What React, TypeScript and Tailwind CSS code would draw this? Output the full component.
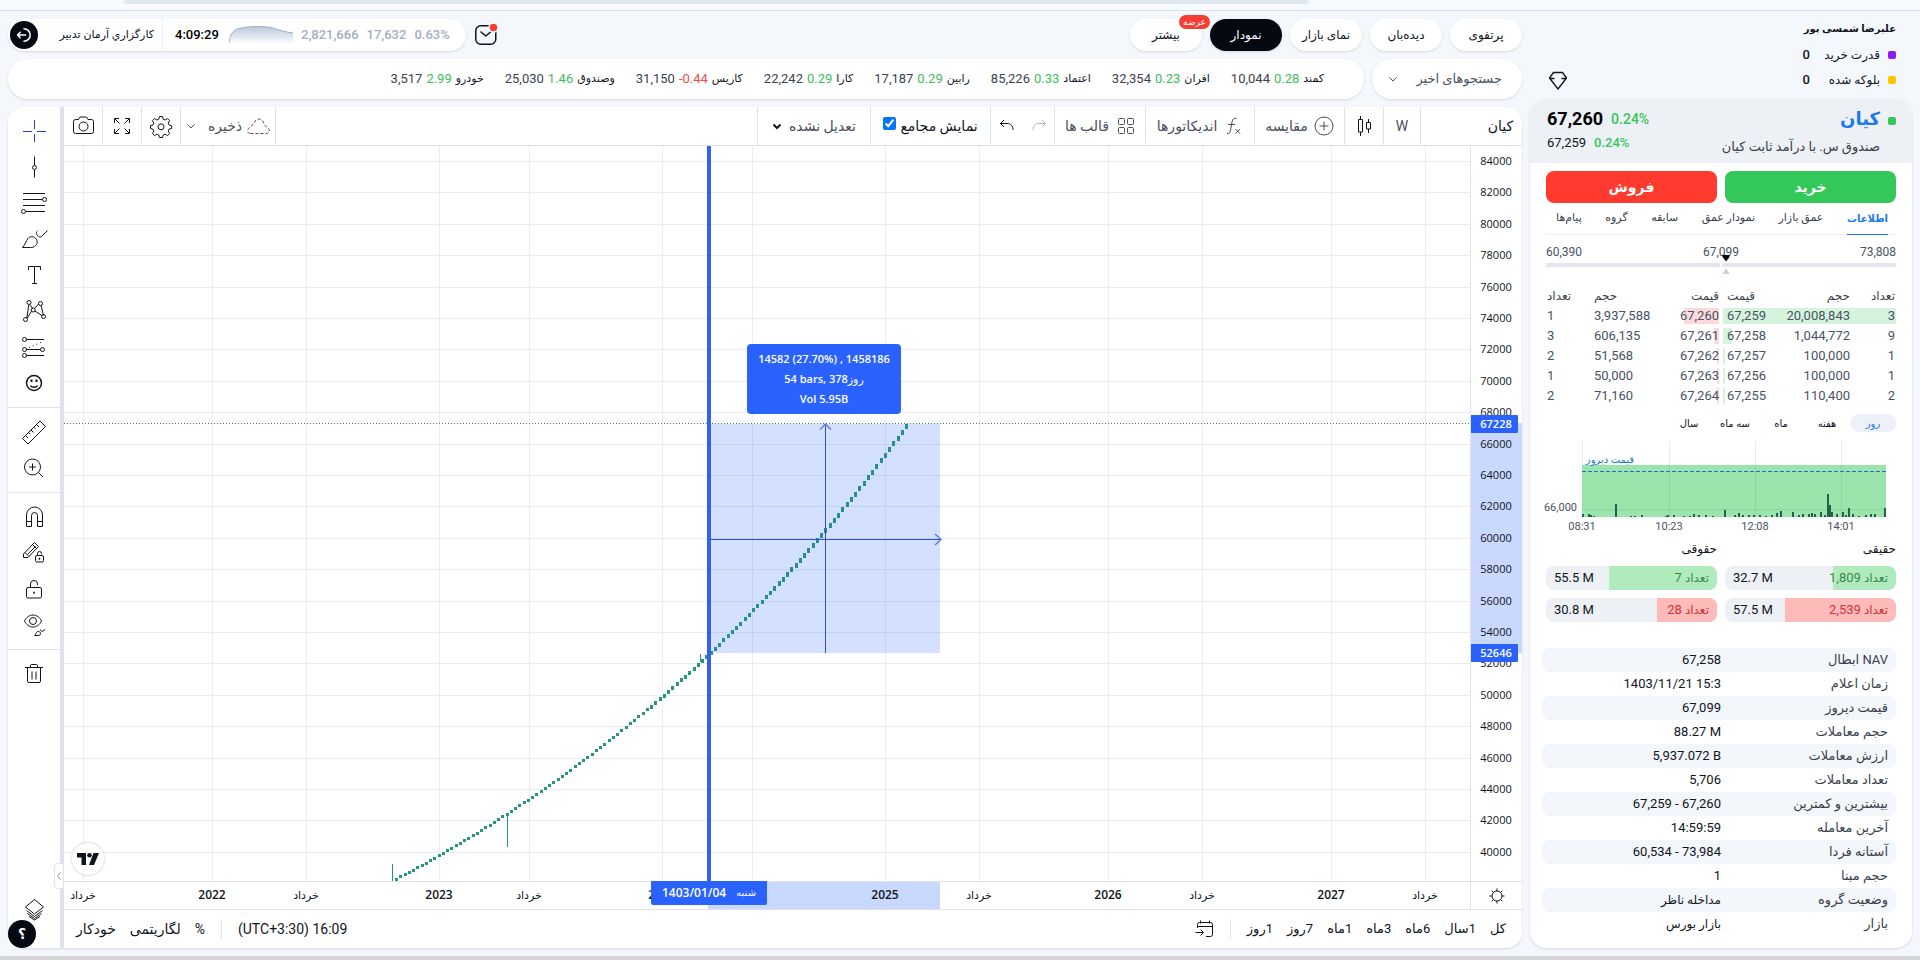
import type { ReactNode } from 'react'
import clsx from 'clsx'

const tickers = [
  { name: 'کمند', change: '0.28', price: '10,044' },
  { name: 'افران', change: '0.23', price: '32,354' },
  { name: 'اعتماد', change: '0.33', price: '85,226' },
  { name: 'رابین', change: '0.29', price: '17,187' },
  { name: 'کارا', change: '0.29', price: '22,242' },
  { name: 'کاریس', change: '-0.44', price: '31,150' },
  { name: 'وصندوق', change: '1.46', price: '25,030' },
  { name: 'خودرو', change: '2.99', price: '3,517' },
]

const bids = [
  { count: '3', volume: '20,008,843', price: '67,259', depth: 100 },
  { count: '9', volume: '1,044,772', price: '67,258', depth: 5 },
  { count: '1', volume: '100,000', price: '67,257', depth: 1 },
  { count: '1', volume: '100,000', price: '67,256', depth: 1 },
  { count: '2', volume: '110,400', price: '67,255', depth: 1 },
]

const asks = [
  { count: '1', volume: '3,937,588', price: '67,260', depth: 20 },
  { count: '3', volume: '606,135', price: '67,261', depth: 3 },
  { count: '2', volume: '51,568', price: '67,262', depth: 1 },
  { count: '1', volume: '50,000', price: '67,263', depth: 1 },
  { count: '2', volume: '71,160', price: '67,264', depth: 1 },
]

const details = [
  ['NAV ابطال', '67,258'],
  ['زمان اعلام', '1403/11/21 15:3'],
  ['قیمت دیروز', '67,099'],
  ['حجم معاملات', '88.27 M'],
  ['ارزش معاملات', '5,937.072 B'],
  ['تعداد معاملات', '5,706'],
  ['بیشترین و کمترین', '67,259 - 67,260'],
  ['آخرین معامله', '14:59:59'],
  ['آستانه فردا', '60,534 - 73,984'],
  ['حجم مبنا', '1'],
  ['وضعیت گروه', 'مداخله ناظر'],
  ['بازار', 'بازار بورس'],
]

/* ---------- icons ---------- */

function Icon({ children, size = 28 }: { children: ReactNode; size?: number }) {
  return (
    <svg
      width={size}
      height={size}
      viewBox={`0 0 ${size} ${size}`}
      fill="none"
      stroke="currentColor"
      strokeWidth="1"
      className="shrink-0"
      aria-hidden="true"
    >
      {children}
    </svg>
  )
}

const CrossIcon = () => (
  <Icon>
    <path d="M14.5 3v9M14.5 17v8M3 14.5h9M17 14.5h9" stroke="#2a3fd0" />
  </Icon>
)

const LineIcon = () => (
  <Icon>
    <path d="M14.5 3.5v8.500M14.5 17v7.500" />
    <circle cx="14.500" cy="14.500" r="2" />
  </Icon>
)

const FibIcon = () => (
  <Icon>
    <path d="M3 4.500h22M3 10.500h19.500M3 16.500h22M6 22.500h19" />
    <circle cx="24.500" cy="10.500" r="2" />
    <circle cx="3.500" cy="22.500" r="2" />
  </Icon>
)

const BrushIcon = () => (
  <Icon>
    <path d="M2.500 22.500C5 20 6 16 8 13.500c2-2.500 5.500-2.300 7.500-.3s2.300 5.300.3 7.300c-1.600 1.600-3.300 2-5.300 2z" />
    <path d="M17.500 6l-.8.800c-1.200 1.800 1.300 5.200 3.300 5.200 1.500 0 2-1 3-2l4.500-4.500" />
  </Icon>
)

const TextIcon = () => (
  <Icon>
    <path d="M8.500 9V5.500h12V9M14.500 5.500v17M12 22.500h5" />
  </Icon>
)

const PatternIcon = () => (
  <Icon>
    <path d="M8.800 8l-2 13M10 7.500l2.500 4M14.500 11.500l4-4.500M21 8l2.500 10.500M14.800 14l7.500 4.800M11.500 14.200L7 21.300" />
    <circle cx="9" cy="5.500" r="2" />
    <circle cx="20.500" cy="6.500" r="2" />
    <circle cx="13.200" cy="13" r="2" />
    <circle cx="23.500" cy="19.500" r="2" />
    <circle cx="5.500" cy="22.500" r="2" />
  </Icon>
)

const ForecastIcon = () => (
  <Icon>
    <path d="M6 6.500h18M6 16.500h14.500M6 22.500h18" />
    <path d="M9 14.500L23 8.500" strokeDasharray="1 3" />
    <circle cx="4.500" cy="6.500" r="2" />
    <circle cx="4.500" cy="16.500" r="2" />
    <circle cx="22.500" cy="16.500" r="2" />
    <circle cx="4.500" cy="22.500" r="2" />
  </Icon>
)

const SmileIcon = () => (
  <Icon>
    <circle cx="14" cy="14" r="7.500" strokeWidth="1.500" />
    <path d="M10.500 16.500c1 2.300 6 2.300 7 0" strokeWidth="1.500" />
    <path d="M11.500 10.500v2.500M16.500 10.500v2.500" strokeWidth="2" />
  </Icon>
)

const RulerIcon = () => (
  <Icon>
    <path d="M2.500 20.500L20 3l5.500 5.500L8 26z" strokeLinejoin="round" />
    <path d="M5.500 17.500l2.500 2.500M8.500 14.500l1.700 1.700M11 12l2.500 2.500M13.800 9.200l1.700 1.700M16.500 6.500L19 9" />
  </Icon>
)

const ZoomIcon = () => (
  <Icon>
    <circle cx="12.500" cy="13" r="8" />
    <path d="M18.500 18.500L23 23M9 13h7M12.500 9.500v7" />
  </Icon>
)

const MagnetIcon = () => (
  <Icon>
    <path d="M6.500 23.500V12a8 8 0 0 1 16 0v11.500h-5V12.500a3 3 0 0 0-6 0v11zM6.500 18.500h5M17.500 18.500h5" />
  </Icon>
)

const Padlock = ({ x, y, w, h, r }: { x: number; y: number; w: number; h: number; r: number }) => (
  <>
    <rect x={x} y={y} width={w} height={h} rx="1.500" />
    <path d={`M${x + w / 2 - r} ${y}v-${r}a${r} ${r} 0 0 1 ${r * 2} 0v1`} />
    <path d={`M${x + w / 2} ${y + h / 2 - 1}v2`} strokeWidth="1.500" />
  </>
)

const PencilLockIcon = () => (
  <Icon>
    <path d="M3.500 18.500v-3.500L14.500 3.500l4 4L8 18.500zM5 13.500l4 4M12.500 5.500l4 4M7.500 15.500l8-8" strokeLinejoin="round" />
    <Padlock x={15.5} y={16.5} w={8} h={6.5} r={2} />
  </Icon>
)

const LockIcon = () => (
  <Icon>
    <Padlock x={6.5} y={12.5} w={15} h={10.5} r={3.5} />
  </Icon>
)

const EyeIcon = () => (
  <Icon>
    <path d="M4.500 10c2-4 5-6 8.500-6s6.500 2 8.500 6c-2 4-5 6-8.500 6s-6.500-2-8.500-6z" />
    <circle cx="13" cy="10" r="3.500" />
    <path d="M14.500 24.500c2-1 1-3 3-4 1.500-.5 3 .5 3 2s-1 2-2.500 2zM20.500 18.500c0 2 1.500 2 2.500 1.500l2-1.500" />
  </Icon>
)

const TrashIcon = () => (
  <Icon>
    <path d="M5 7.500h18M10.500 7V5.500a1 1 0 0 1 1-1h5a1 1 0 0 1 1 1V7M7.500 7.500v13.500a1.500 1.500 0 0 0 1.500 1.500h10a1.500 1.500 0 0 0 1.500-1.500V7.500M12 11.500v8M16 11.500v8" />
  </Icon>
)

const LayersIcon = () => (
  <Icon>
    <path d="M14.500 3.500l9 7.500-9 7-9-7zM6.500 14.500l8 6 8-6M7.500 17.500l7 5 7-5M9 20.500l5.500 3.500 5.500-3.500" strokeLinejoin="round" />
  </Icon>
)

const GearIcon = () => (
  <Icon>
    <path d="M12.500 4.500h3l.7 2.700 1.900.8 2.400-1.400 2.100 2.100-1.400 2.400.8 1.900 2.700.7v2.800l-2.700.7-.8 1.900 1.400 2.400-2.100 2.100-2.400-1.400-1.900.8-.7 2.500h-3l-.7-2.500-1.900-.8-2.400 1.400-2.100-2.100 1.400-2.400-.8-1.900-2.500-.7v-2.800l2.500-.7.8-1.900-1.400-2.400 2.100-2.100L9.900 8l1.900-.8z" strokeLinejoin="round" />
    <circle cx="14" cy="14.800" r="3" />
  </Icon>
)

const ExpandIcon = () => (
  <Icon>
    <path d="M6.500 11V6.500H11M7 7l4.500 4.500M17 6.500h4.500V11M21 7l-4.500 4.500M6.500 17v4.500H11M7 21l4.500-4.500M21.500 17v4.500H17M21 21l-4.500-4.500" />
  </Icon>
)

const CameraIcon = () => (
  <Icon>
    <path d="M9.500 7.500l1.500-2.500h6.500L19 7.500h3.500a2 2 0 0 1 2 2v10a2 2 0 0 1-2 2h-16a2 2 0 0 1-2-2v-10a2 2 0 0 1 2-2z" />
    <circle cx="14.500" cy="14.500" r="4.500" />
  </Icon>
)

const CloudIcon = () => (
  <Icon size={24}>
    <path d="M4.500 19.500h15.500a3 3 0 0 0 2-5.500l-3.500-3-1.500-3.500c-2-3.500-7-3.500-8.500 1l-.5 1.500-4 3C1 15 .500 19.500 4.500 19.500z" strokeDasharray="3 2" />
  </Icon>
)

const CompareIcon = () => (
  <Icon size={20}>
    <circle cx="10" cy="10" r="9" />
    <path d="M10 5.500v9M5.500 10h9" />
  </Icon>
)

const FxIcon = () => (
  <Icon size={18}>
    <path d="M2 16.500c2 .5 3-.5 3.500-3.500L7 5c.500-3 2-4 4.500-3.500M3 7.500h7M10.500 12l4.500 4.500M15 12l-4.500 4.500" />
  </Icon>
)

const GridIcon = () => (
  <Icon size={18}>
    <rect x="1.500" y="1.500" width="6" height="6" rx="1" />
    <rect x="10.500" y="1.500" width="6" height="6" rx="1" />
    <rect x="1.500" y="10.500" width="6" height="6" rx="1" />
    <rect x="10.500" y="10.500" width="6" height="6" rx="1" />
  </Icon>
)

const CandlesIcon = () => (
  <Icon size={20}>
    <path d="M6.500 0v3M6.500 16v4M14.500 3v3M14.500 13v4" />
    <path d="M4.500 3.500h4v12.500h-4zM12.500 6.500h4v6.500h-4z" />
  </Icon>
)

const UndoIcon = () => (
  <Icon size={16}>
    <path d="M5 2L1.500 5.500 5 9M1.500 5.500H8c4 0 6 2.500 6 6.500" />
  </Icon>
)

const RedoIcon = () => (
  <Icon size={16}>
    <path d="M11 2l3.500 3.500L11 9M14.500 5.500H8c-4 0-6 2.500-6 6.500" />
  </Icon>
)

const Chevron = ({ strong }: { strong?: boolean }) => (
  <svg width="10" height="10" viewBox="0 0 10 10" fill="none" stroke="currentColor" strokeWidth={strong ? 2 : 1} className="shrink-0">
    <path d="M1.500 3.500L5 7l3.500-3.500" />
  </svg>
)

const MailIcon = () => (
  <svg width="24" height="24" viewBox="0 0 24 24" fill="none" stroke="#10151c" strokeWidth="1.500">
    <rect x="1.750" y="2.750" width="20" height="18.500" rx="5" />
    <path d="M7 9l4.800 4L16.500 9" strokeLinecap="round" strokeLinejoin="round" />
    <circle cx="19.500" cy="4.500" r="4.500" fill="#ff3b30" stroke="#f4f8fc" />
  </svg>
)

const ExitIcon = () => (
  <svg width="16" height="16" viewBox="0 0 16 16" fill="none" stroke="white" strokeWidth="1.500" strokeLinecap="round" strokeLinejoin="round">
    <path d="M8 1.800a6 6 0 1 1 0 12.400M9.500 8H1.500M4.200 5.300L1.500 8l2.700 2.700" />
  </svg>
)

const DiamondIcon = () => (
  <svg width="20" height="20" viewBox="0 0 20 20" fill="none" stroke="#10151c" strokeWidth="1.300" strokeLinejoin="round">
    <path d="M5.500 1.500h9l4 5.500-8.500 11L1.500 7zM2 7.500h4.500M13.500 7.500H18" />
  </svg>
)

const GoToIcon = () => (
  <Icon size={20}>
    <path d="M3.500 9V5.500a2 2 0 0 1 2-2h11a2 2 0 0 1 2 2v10a2 2 0 0 1-2 2H12M3.500 7.500h15M6.500 1.500v3M15.500 1.500v3M1.500 13.500H9M6.500 10.500l3 3-3 3" />
  </Icon>
)

const AxisSettingsIcon = () => (
  <Icon size={18}>
    <circle cx="9" cy="9" r="5" />
    <path d="M9 1.500V4M9 14v2.500M1.500 9H4M14 9h2.500M3.700 3.700l1.800 1.800M12.500 12.500l1.800 1.800M14.300 3.700l-1.800 1.800M5.500 12.500l-1.800 1.800" />
  </Icon>
)

/* ---------- top rows ---------- */

function StatusPill() {
  return (
    <div dir="ltr" className="flex h-8 w-[458px] items-center rounded-full bg-white pr-4 pl-0.5 shadow-sm">
      <button aria-label="خروج" className="flex size-7 items-center justify-center rounded-full bg-[#050a12]">
        <ExitIcon />
      </button>
      <span dir="rtl" className="w-[124px] pr-2 text-[11px] whitespace-nowrap text-[#10151c]">
        کارگزاري آرمان تدبير
      </span>
      <span className="h-8 w-px bg-[#eceff3]" />
      <span className="w-[66px] pl-3 text-[13px] font-medium text-black">4:09:29</span>
      <svg width="64" height="18" viewBox="0 0 64 18">
        <defs>
          <linearGradient id="spark" x1="0" x2="0" y1="0" y2="1">
            <stop offset="0" stopColor="#b9c7da" />
            <stop offset="1" stopColor="#ffffff" />
          </linearGradient>
        </defs>
        <path d="M0 17C1 7 5 3 12 2 22 0 36 0 44 2c6 2 12 4 20 5v11H0z" fill="url(#spark)" />
        <path d="M0 17C1 7 5 3 12 2 22 0 36 0 44 2c6 2 12 4 20 5" fill="none" stroke="#9fb0c8" />
      </svg>
      <span className="ml-2 flex gap-2 text-[13px] font-medium text-[#a3aec2]">
        <span>2,821,666</span>
        <span>17,632</span>
        <span>0.63%</span>
      </span>
    </div>
  )
}

function TopNav() {
  const items = ['پرتفوی', 'دیده‌بان', 'نمای بازار', 'نمودار', 'بیشتر']
  return (
    <header className="flex h-8 items-center gap-2">
      {items.map((label) => (
        <button
          key={label}
          className={clsx(
            'relative h-8 w-[72px] rounded-full text-xs shadow-sm',
            label === 'نمودار' ? 'bg-[#050a12] text-white' : 'bg-white text-[#10151c]',
          )}
        >
          {label}
          {label === 'بیشتر' && (
            <span className="absolute -top-1 -right-2 flex h-3.5 w-[31px] items-center justify-center rounded-full bg-[#f53d34] text-[9px] text-white">
              عرضه
            </span>
          )}
        </button>
      ))}
      <button aria-label="پیام‌ها" className="mr-auto">
        <MailIcon />
      </button>
      <StatusPill />
    </header>
  )
}

function TickerRow() {
  return (
    <div className="flex h-10 gap-2">
      <button className="flex w-[150px] items-center justify-between rounded-[20px] bg-white pr-5 pl-4 text-[13px] text-[#4a5260] shadow-sm">
        جستجوهای اخیر
        <Chevron />
      </button>
      <div className="flex flex-1 items-center gap-[21px] rounded-[20px] bg-white pr-10 shadow-sm">
        {tickers.map((t) => (
          <a key={t.name} href="#" className="flex items-center gap-1 text-[13px] text-[#3c424c]">
            <span className="text-[11px] text-[#10151c]">{t.name}</span>
            <span dir="ltr" className={t.change.startsWith('-') ? 'text-[#f04a48]' : 'text-[#3dbd5c]'}>
              {t.change}
            </span>
            <span>{t.price}</span>
          </a>
        ))}
      </div>
    </div>
  )
}

/* ---------- chart ---------- */

const toolGroups = [
  [CrossIcon, LineIcon, FibIcon, BrushIcon, TextIcon, PatternIcon, ForecastIcon, SmileIcon],
  [RulerIcon, ZoomIcon],
  [MagnetIcon, PencilLockIcon, LockIcon, EyeIcon],
  [TrashIcon],
]

function ToolRail() {
  return (
    <aside className="relative flex w-[52px] shrink-0 flex-col rounded-tl-2xl bg-white text-[#10151c]">
      {toolGroups.map((group, i) => (
        <div key={i} className={clsx('flex flex-col items-center py-1.5', i < 3 && 'border-b border-[#dfe2e8]')}>
          {group.map((Tool, j) => (
            <button key={j} className="flex size-9 items-center justify-center">
              <Tool />
            </button>
          ))}
        </div>
      ))}
      <button className="mx-auto mt-auto mb-5 flex size-9 items-center justify-center">
        <LayersIcon />
      </button>
      <button className="absolute bottom-0 left-0 size-7 rounded-full bg-[#050a12] text-sm font-bold text-white">؟</button>
      <button
        aria-label="بستن نوار"
        className="absolute -right-1 bottom-[59px] flex h-[26px] w-2.5 items-center justify-center rounded-l border border-[#dfe2ea] bg-white text-[#9097a5]"
      >
        <svg width="4" height="8" viewBox="0 0 4 8" fill="none" stroke="currentColor">
          <path d="M3.500 .5L.5 4l3 3.500" />
        </svg>
      </button>
    </aside>
  )
}

function Toolbar() {
  const cell = 'flex shrink-0 items-center justify-center border-l border-[#dfe2e8]'
  return (
    <div className="flex h-[39px] border-b border-[#dfe2e8] text-sm text-[#4a4e59]">
      <div className={clsx(cell, 'w-[102px] pl-[58px] text-[#10151c]')}>کیان</div>
      <button className={clsx(cell, 'w-[37px]')}>W</button>
      <button aria-label="نوع نمودار" className={clsx(cell, 'w-[39px] text-[#10151c]')}>
        <CandlesIcon />
      </button>
      <button className={clsx(cell, 'w-[90px] gap-1.5')}>
        <CompareIcon />
        مقایسه
      </button>
      <button className={clsx(cell, 'w-[109px] gap-2')}>
        <FxIcon />
        اندیکاتورها
      </button>
      <button className={clsx(cell, 'w-[91px] gap-2')}>
        <GridIcon />
        قالب ها
      </button>
      <div className={clsx(cell, 'w-16 gap-4')}>
        <button aria-label="جلو" className="text-[#b2b5be]">
          <RedoIcon />
        </button>
        <button aria-label="برگشت" className="text-[#10151c]">
          <UndoIcon />
        </button>
      </div>
      <label className={clsx(cell, 'w-[120px] gap-1 text-[#10151c]')}>
        نمایش مجامع
        <input type="checkbox" defaultChecked className="mb-1.5 size-[13px] accent-[#0075ff]" />
      </label>
      <div className={clsx(cell, 'relative w-[113px]')}>
        <select aria-label="تعدیل" className="w-full appearance-none bg-transparent pr-3.5">
          <option>تعدیل نشده</option>
        </select>
        <span className="pointer-events-none absolute left-3.5 text-[#10151c]">
          <Chevron strong />
        </span>
      </div>
      <div className="flex-1" />
      <button className="flex w-24 items-center justify-center gap-1 border-x border-[#dfe2e8]">
        <CloudIcon />
        <span className="ml-2">ذخیره</span>
        <Chevron />
      </button>
      <button aria-label="تنظیمات" className={clsx(cell, 'w-[39px] text-[#10151c]')}>
        <GearIcon />
      </button>
      <button aria-label="تمام صفحه" className={clsx(cell, 'w-[39px] text-[#10151c]')}>
        <ExpandIcon />
      </button>
      <button aria-label="عکس" className="flex w-[38px] items-center justify-center text-[#10151c]">
        <CameraIcon />
      </button>
    </div>
  )
}

const priceLabels = Array.from({ length: 23 }, (_, i) => 84000 - i * 2000)
const priceToY = (price: number) => 15 + ((84000 - price) / 2000) * 31.4

const timeLabels: [number, string][] = [
  [19, 'خرداد'],
  [148, '2022'],
  [242, 'خرداد'],
  [375, '2023'],
  [465, 'خرداد'],
  [598, '2024'],
  [688, ''],
  [821, '2025'],
  [915, 'خرداد'],
  [1044, '2026'],
  [1138, 'خرداد'],
  [1267, '2027'],
  [1361, 'خرداد'],
]

// weekly bars, compounding a little faster over time
const bars = Array.from({ length: 121 }, (_, i) => {
  const x = 332 + i * 4.25
  const d = x - 646
  const price = 52646 * Math.exp(0.0011557 * d + 4.33e-7 * d * d)
  return { x: Math.round(x), y: Math.round(priceToY(price)), h: d > 60 ? 5 : d > -60 ? 4 : 3 }
})

function PricePane() {
  return (
    <div className="relative min-w-0 flex-1 overflow-hidden">
      <svg className="absolute inset-0 size-full" shapeRendering="crispEdges">
        <g stroke="#ececef">
          {priceLabels.map((p) => (
            <line key={p} x1="0" x2="100%" y1={Math.round(priceToY(p)) + 0.5} y2={Math.round(priceToY(p)) + 0.5} />
          ))}
          {timeLabels.map(([x]) => (
            <line key={x} x1={x + 0.5} x2={x + 0.5} y1="0" y2="100%" />
          ))}
        </g>
        <g fill="#26967f">
          {bars.map((b) => (
            <rect key={b.x} x={b.x - 1} y={b.y - 2} width="3" height={b.h} />
          ))}
          <rect x="328" y="718" width="1" height="17" />
          <rect x="443" y="667" width="1" height="34" />
          <rect x="636" y="508" width="1" height="8" />
        </g>
        <line x1="0" x2="100%" y1="277.500" y2="277.500" stroke="#26897a" strokeDasharray="1 2" />
        <rect x="645" y="278" width="231" height="229" fill="#2962ff" fillOpacity="0.2" />
        <rect x="643" y="0" width="4" height="100%" fill="#3461ee" />
        <path d="M646 393.500h230M761.500 278v229" stroke="#2f52c8" />
        <path d="M871 388l6 5.500-6 5.500M756 283.500l5.500-5.500 5.500 5.500" fill="none" stroke="#5f7fe8" strokeWidth="1.500" shapeRendering="auto" />
      </svg>
      <div
        dir="ltr"
        className="absolute top-[198px] left-[683px] w-[154px] rounded bg-[#2962ff] py-[5px] text-center text-[11px] leading-5 font-semibold text-white [font-family:'Open_Sans','DejaVu_Sans',sans-serif]"
      >
        <p>14582 (27.70%) , 1458186</p>
        <p>
          54 bars, 378<span className="font-normal">روز</span>
        </p>
        <p>Vol 5.95B</p>
      </div>
      <div className="absolute bottom-1.5 left-2 flex size-8 items-center justify-center rounded-full bg-white shadow-[0_0_2px_1px_rgba(0,0,0,0.12)]">
        <svg width="22" height="12" viewBox="0 0 22 12" fill="#10151c">
          <path d="M0 0h9v12H4.500V4.500H0zM16.500 0H22l-5 12h-5z" />
          <circle cx="12.500" cy="2.300" r="2.300" />
        </svg>
      </div>
    </div>
  )
}

function PriceAxis() {
  return (
    <div dir="ltr" className="w-[52px] shrink-0 border-l border-[#dfe2e8]">
      <svg className="size-full text-[11px] [font-family:'Open_Sans',sans-serif]">
        <rect x="0" y="277" width="52" height="230" fill="#c9d8fe" />
        {priceLabels.map((p) => (
          <text key={p} x="25" y={Math.round(priceToY(p)) + 4} textAnchor="middle" fill="#10151c">
            {p}
          </text>
        ))}
        {[67228, 52646].map((p) => (
          <g key={p}>
            <rect x="-1" y={Math.round(priceToY(p)) - 9} width="48" height="18" rx="1" fill="#2962ff" />
            <text x="25" y={Math.round(priceToY(p)) + 4} textAnchor="middle" fill="white" fontWeight="600">
              {p}
            </text>
          </g>
        ))}
      </svg>
    </div>
  )
}

function TimeAxis() {
  return (
    <div dir="ltr" className="flex h-[29px] border-y border-[#dfe2e8]">
      <div className="relative min-w-0 flex-1">
        <svg className="size-full [font-family:'Open_Sans','DejaVu_Sans',sans-serif]">
          <rect x="644" y="0" width="232" height="27" fill="#c9d8fe" />
          {timeLabels.map(([x, label]) => {
            const year = label[0] === '2'
            return (
              <text key={x} x={x} y="17" textAnchor="middle" fill="#10151c" fontSize={year ? 12 : 11} fontWeight={year ? 600 : 400}>
                {label}
              </text>
            )
          })}
        </svg>
        <div className="absolute -top-px left-[587px] flex h-6 w-[116px] items-center justify-center gap-2.5 rounded-b-xs bg-[#2962ff] text-xs font-semibold text-white [font-family:'Open_Sans','DejaVu_Sans',sans-serif]">
          <span>1403/01/04</span>
          <span className="text-[10px] font-normal">شنبه</span>
        </div>
      </div>
      <button aria-label="تنظیمات محور" className="flex w-[52px] items-center justify-center border-l border-[#dfe2e8] text-[#10151c]">
        <AxisSettingsIcon />
      </button>
    </div>
  )
}

function RangeBar() {
  return (
    <div className="flex h-[38px] items-center pr-4 pl-3 text-[#10151c]">
      <div className="flex gap-3.5 text-[13px]">
        {['کل', '1سال', '6ماه', '3ماه', '1ماه', '7روز', '1روز'].map((r) => (
          <button key={r}>{r}</button>
        ))}
      </div>
      <span className="mx-4 h-5 w-px bg-[#dfe2e8]" />
      <button aria-label="رفتن به تاریخ">
        <GoToIcon />
      </button>
      <button dir="ltr" className="mr-auto text-sm">
        (UTC+3:30) 16:09
      </button>
      <span className="mx-4 h-5 w-px bg-[#dfe2e8]" />
      <div className="flex items-center gap-3.5 text-sm">
        <button>%</button>
        <button>لگاریتمی</button>
        <button>خودکار</button>
      </div>
    </div>
  )
}

function ChartCard() {
  return (
    <div dir="ltr" className="flex min-h-0 flex-1 rounded-2xl shadow-sm">
      <ToolRail />
      <div className="w-1 bg-[#dfe2ea]" />
      <div dir="rtl" className="flex min-w-0 flex-1 flex-col rounded-r-2xl bg-white">
        <Toolbar />
        <div dir="ltr" className="flex min-h-0 flex-1">
          <PricePane />
          <PriceAxis />
        </div>
        <TimeAxis />
        <RangeBar />
      </div>
    </div>
  )
}

/* ---------- symbol panel ---------- */

function Account() {
  const rows = [
    { label: 'قدرت خرید', color: 'bg-[#8a1cf5]' },
    { label: 'بلوکه شده', color: 'bg-[#fdc800]' },
  ]
  return (
    <div className="relative flex h-[88px] flex-col px-4 pt-1.5 text-xs text-[#10151c]">
      <strong className="h-[25px] text-[10px] leading-6">علیرضا شمسی پور</strong>
      {rows.map((r) => (
        <div key={r.label} className="flex h-[25px] items-center">
          <span className={clsx('ml-2 size-2 rounded-xs', r.color)} />
          <span className="w-[66px]">{r.label}</span>
          <span className="pr-1 text-[13px] font-medium">0</span>
        </div>
      ))}
      <button aria-label="اشتراک" className="absolute bottom-2 left-[18px]">
        <DiamondIcon />
      </button>
    </div>
  )
}

function OrderTable({ rows, side }: { rows: typeof bids; side: 'bid' | 'ask' }) {
  const bid = side === 'bid'
  const align = bid ? 'text-right' : 'text-left'
  const count = clsx('p-0 font-normal', align, bid ? 'w-[46px] pr-px' : 'w-[48px] pl-px')
  const volume = clsx('p-0 font-normal', align)
  const price = clsx('w-[43px] p-0 font-normal', bid ? 'pl-1 text-left' : 'text-right')
  return (
    <table dir={bid ? 'rtl' : 'ltr'} className="w-[173px] table-fixed border-collapse text-[13px] text-[#4a5364]">
      <thead>
        <tr className="h-5 text-xs text-[#3a3f4b]">
          <th className={count}>تعداد</th>
          <th className={volume}>حجم</th>
          <th className={price}>قیمت</th>
        </tr>
      </thead>
      <tbody>
        {rows.map((r) => (
          <tr key={r.price} className="relative h-5">
            <td className={count}>
              <span
                className={clsx('absolute inset-y-0.5 opacity-80', bid ? 'left-0 bg-[#caf0d4]' : 'right-0 bg-[#fbcfd2]')}
                style={{ width: `${r.depth}%` }}
              />
              <span className="relative">{r.count}</span>
            </td>
            <td className={volume}>
              <span className="relative">{r.volume}</span>
            </td>
            <td className={price}>
              <span className="relative">{r.price}</span>
            </td>
          </tr>
        ))}
      </tbody>
    </table>
  )
}

const volumeBars = [
  [1, 3], [7, 3], [9, 2], [12, 1], [34, 13], [49, 1], [53, 1], [60, 2], [84, 1], [86, 2], [92, 2], [102, 1], [108, 1],
  [112, 3], [117, 2], [124, 2], [131, 1], [143, 7], [153, 2], [157, 4], [161, 2], [167, 2], [172, 2], [178, 2], [184, 1],
  [190, 2], [195, 4], [199, 6], [211, 5], [217, 2], [221, 3], [227, 3], [230, 4], [233, 3], [239, 5], [243, 2], [246, 23],
  [248, 12], [250, 5], [255, 3], [261, 5], [264, 2], [267, 9], [271, 3], [277, 1], [284, 2], [289, 3], [293, 3], [303, 9],
]

function MiniChart() {
  return (
    <svg className="h-[96px] w-full overflow-visible text-[11px]" direction="ltr">
      <g stroke="#e6e9ee" shapeRendering="crispEdges">
        {[36.5, 123.5, 209.5, 295.5].map((x) => (
          <line key={x} x1={x} x2={x} y1="2" y2="78" />
        ))}
      </g>
      <rect x="36" y="26" width="304" height="52" fill="#8de09f" fillOpacity="0.88" />
      <g stroke="#8fd3a0" shapeRendering="crispEdges">
        {[123.5, 209.5, 295.5].map((x) => (
          <line key={x} x1={x} x2={x} y1="26" y2="78" />
        ))}
        <line x1="36" x2="340" y1="70.500" y2="70.500" />
      </g>
      {volumeBars.map(([x, h]) => (
        <rect key={x} x={36 + x - 1} y={78 - h} width="2" height={h} fill="#26614f" />
      ))}
      <line x1="36" x2="340" y1="32.500" y2="32.500" stroke="#1f6fd8" strokeDasharray="4 2" />
      <text x="64" y="24" textAnchor="middle" fill="#1976d2" fontSize="10">
        قیمت دیروز
      </text>
      <text x="31" y="72" textAnchor="end" fill="#4a5364">
        66,000
      </text>
      {['08:31', '10:23', '12:08', '14:01'].map((t, i) => (
        <text key={t} x={[36, 123, 209, 295][i]} y="91" textAnchor="middle" fill="#4a5364">
          {t}
        </text>
      ))}
    </svg>
  )
}

function ShareBar({ count, volume, share, up }: { count: string; volume: string; share: number; up?: boolean }) {
  return (
    <div className="relative flex h-6 items-center justify-between overflow-hidden rounded-lg bg-[#edf1f5] px-2">
      <span
        className={clsx('absolute inset-y-0 right-0', up ? 'bg-[#afebbd]' : 'bg-[#ffbaba]')}
        style={{ width: `${share}%` }}
      />
      <span className={clsx('relative text-xs', up ? 'text-[#3a8a50]' : 'text-[#d03238]')}>
        تعداد <span className="text-[13px]">{count}</span>
      </span>
      <span dir="ltr" className="relative text-[13px] text-[#10151c]">
        {volume}
      </span>
    </div>
  )
}

function SymbolPanel() {
  return (
    <section className="flex min-h-0 flex-1 flex-col overflow-hidden rounded-2xl bg-white shadow-sm">
      <div className="flex h-16 justify-between bg-[#edf1f5] pt-2 pr-4 pl-[17px]">
        <div className="flex gap-2">
          <span className="mt-2.5 size-2 rounded-xs bg-[#34c759]" />
          <div>
            <h1 className="h-7 text-lg leading-6 font-bold text-[#1a78f0]">کیان</h1>
            <p className="h-6 text-[13px] leading-6 text-[#3a3f4b]">صندوق س. با درآمد ثابت کیان</p>
          </div>
        </div>
        <div dir="ltr">
          <p className="flex h-6 items-center gap-2 text-lg font-bold text-black">
            67,260 <span className="text-sm font-medium text-[#34c759]">0.24%</span>
          </p>
          <p className="flex h-6 items-center gap-2 text-[13px] text-[#10151c]">
            67,259 <span className="font-medium text-[#34c759]">0.24%</span>
          </p>
        </div>
      </div>

      <div className="px-4 pt-2">
        <div className="grid h-8 grid-cols-2 gap-2 text-sm font-bold text-white">
          <button className="rounded-lg bg-[#34c759]">خرید</button>
          <button className="rounded-lg bg-[#ff3b30]">فروش</button>
        </div>

        <nav className="flex h-8 items-stretch justify-between border-b border-[#eef0f3] pr-2 pl-2.5 text-[11px] text-[#3a3f4b]">
          {['اطلاعات', 'عمق بازار', 'نمودار عمق', 'سابقه', 'گروه', 'پیام‌ها'].map((tab, i) => (
            <button
              key={tab}
              className={clsx(i === 0 && '-mb-px border-b border-[#1a6fe0] text-[10px] font-bold text-[#1a78f0]')}
            >
              {tab}
            </button>
          ))}
        </nav>

        <div className="relative h-[51px] pt-1.5">
          <div className="flex h-[22px] items-center justify-between text-xs text-[#4a5364]">
            <span>73,808</span>
            <span>67,099</span>
            <span>60,390</span>
          </div>
          <div className="flex gap-0.5">
            <span className="h-1 flex-1 bg-[#e2e6ee]" />
            <span className="h-1 flex-1 bg-[#e2e6ee]" />
          </div>
          <svg width="8" height="20" viewBox="0 0 8 20" className="absolute top-5 left-[176px]">
            <path d="M.5 0h7v2L4 6.500.5 2z" fill="#050a12" />
            <path d="M4 13l3.500 6H.5z" fill="#c9d3e2" />
          </svg>
        </div>

        <div className="flex justify-between">
          <OrderTable rows={bids} side="bid" />
          <OrderTable rows={asks} side="ask" />
        </div>

        <div className="mt-2 flex h-[18px] items-center text-[10px] text-[#10151c]">
          {['روز', 'هفته', 'ماه', 'سه ماه', 'سال'].map((p, i) => (
            <button key={p} className={clsx('h-[18px] w-[46px]', i === 0 && 'rounded-full bg-[#edf2f8] text-[#1a78f0]')}>
              {p}
            </button>
          ))}
        </div>

        <div className="mt-[7px]">
          <MiniChart />
        </div>

        <div className="mt-1 grid grid-cols-2 gap-2">
          <h2 className="h-[19px] text-xs leading-5 text-[#10151c]">حقیقی</h2>
          <h2 className="h-[19px] text-xs leading-5 text-[#10151c]">حقوقی</h2>
          <ShareBar count="1,809" volume="32.7 M" share={37} up />
          <ShareBar count="7" volume="55.5 M" share={63} up />
          <ShareBar count="2,539" volume="57.5 M" share={65} />
          <ShareBar count="28" volume="30.8 M" share={35} />
        </div>

        <dl className="mt-[26px] -ml-1">
          {details.map(([label, value], i) => (
            <div key={label} className={clsx('flex h-6 items-center rounded-lg pr-2', i % 2 === 0 && 'bg-[#f3f6fa]')}>
              <dt className="w-[167px] text-[13px] text-[#3a3f4b]">{label}</dt>
              <dd dir="ltr" className={clsx('text-[#10151c]', i < 10 ? 'text-[13px]' : 'text-xs')}>
                {value}
              </dd>
            </div>
          ))}
        </dl>
      </div>
    </section>
  )
}

function App() {
  return (
    <div
      dir="rtl"
      lang="fa"
      className="flex h-screen flex-col overflow-hidden bg-[#f4f8fc] [font-family:Roboto,'DejaVu_Sans',sans-serif]"
    >
      <div className="h-[11px] shrink-0 border-b border-[#dde1e8] bg-[#f7faff] pr-[611px] pl-[123px]">
        <div className="h-1 rounded-b-full bg-[#dfe9ef]" />
      </div>
      <div className="flex min-h-0 flex-1 gap-2 px-2 pb-2">
        <div className="flex w-[382px] shrink-0 flex-col">
          <Account />
          <SymbolPanel />
        </div>
        <main className="flex min-w-0 flex-1 flex-col gap-2 pt-2">
          <TopNav />
          <TickerRow />
          <ChartCard />
        </main>
      </div>
      <div className="h-1 shrink-0 bg-[#d3d4d6]" />
    </div>
  )
}

export default App
